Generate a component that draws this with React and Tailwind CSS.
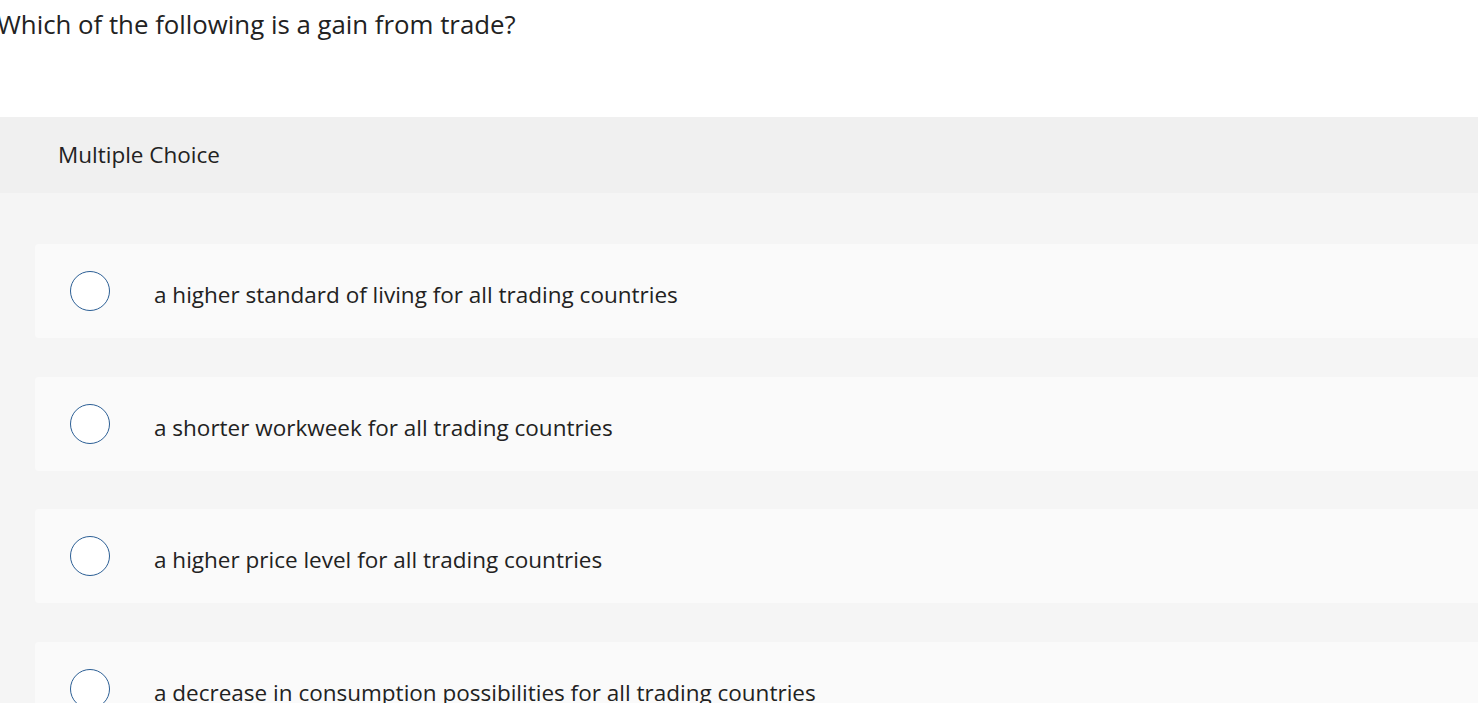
const options = [
    'a higher standard of living for all trading countries',
    'a shorter workweek for all trading countries',
    'a higher price level for all trading countries',
    'a decrease in consumption possibilities for all trading countries'
];

const App = () => {
    return (
        <div className="w-[1478px] h-[703px] overflow-hidden bg-white text-[#222222]" style={{ fontFamily: '"Open Sans", "Liberation Sans", sans-serif' }}>
            <h1 className="ml-[-3px] pt-[6px] h-[117px] text-[25.8px] leading-[36px] font-normal">
                Which of the following is a gain from trade?
            </h1>

            <div className="h-[76px] bg-[#f0f0f0] flex items-center pl-[58px] text-[22.5px]">
                Multiple Choice
            </div>

            <div className="bg-[#f5f5f5] pl-[35px] pt-[51px] pb-10 flex flex-col gap-[38.5px]">
                {options.map((opt) => (
                    <label key={opt} className="h-[94px] shrink-0 bg-[#fafafa] rounded-l-[4px] flex items-center pl-[35px]">
                        <span className="w-10 h-10 shrink-0 rounded-full bg-white border-[1.5px] border-[#2c5f95]"></span>
                        <span className="ml-[44px] mt-[8px] text-[22.5px] leading-[30px]">{opt}</span>
                    </label>
                ))}
            </div>
        </div>
    );
};

export default App;
